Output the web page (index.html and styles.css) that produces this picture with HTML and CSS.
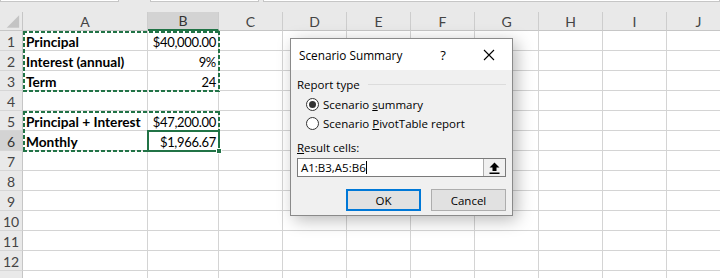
FILE: index.html
```html
<!DOCTYPE html>
<html>
<head lang="en">
    <meta charset="UTF-8">
    <title>Scenario Summary</title>
    <link rel="stylesheet" href="styles.css">
</head>
<body>
<div class="topbar">
    <div class="namebox"></div>
    <div class="fxbox"></div>
    <div class="formula"></div>
</div>
<div class="stack">
    <div class="sheet" id="sheet"></div>
    <div class="marks">
        <div class="ants ants1"></div>
        <div class="ants ants2"></div>
        <div class="active"><span class="handle"></span></div>
    </div>
</div>

<div class="dialog">
    <div class="title">
        <span class="title-text">Scenario Summary</span>
        <span class="tbtn help">?</span>
        <span class="tbtn close">
            <svg width="12" height="12" viewBox="0 0 12 12"><path d="M1 1L11 11M11 1L1 11" stroke="#000" stroke-width="1.1" fill="none"/></svg>
        </span>
    </div>
    <div class="body">
        <div class="group">
            <span>Report type</span>
            <span class="rule"></span>
        </div>
        <label class="radio first"><span class="dot checked"></span><span>Scenario <u>s</u>ummary</span></label>
        <label class="radio"><span class="dot"></span><span>Scenario <u>P</u>ivotTable report</span></label>
        <div class="field-label"><u>R</u>esult cells:</div>
        <div class="field">
            <div class="field-text">A1:B3,A5:B6<span class="caret"></span></div>
            <div class="field-btn">
                <svg width="11" height="12" viewBox="0 0 11 12"><path d="M5.5 0.5L10.5 5.5H7.5V9H3.5V5.5H0.5Z" fill="#000"/><rect x="0.5" y="10.5" width="10" height="1.5" fill="#000"/></svg>
            </div>
        </div>
        <div class="buttons">
            <span class="btn default">OK</span>
            <span class="btn">Cancel</span>
        </div>
    </div>
</div>

<script>
    var cols = "ABCDEFGHIJ".split("");
    var data = {
        1: ["Principal", "$40,000.00"],
        2: ["Interest (annual)", "9%"],
        3: ["Term", "24"],
        5: ["Principal + Interest", "$47,200.00"],
        6: ["Monthly", "$1,966.67"]
    };
    var html = '<div class="hd corner"><svg width="23" height="19" viewBox="0 0 23 19"><path d="M7 16H20V3Z" fill="#c4c4c4"/></svg></div>';
    for (var c = 0; c < cols.length; c++) {
        html += '<div class="hd col' + (cols[c] == "B" ? ' on' : '') + '">' + cols[c] + '</div>';
    }
    for (var r = 1; r <= 13; r++) {
        // row 13 is cut by the window edge, its number doesn't show
        html += '<div class="hd row' + (r == 6 ? ' on' : '') + '">' + (r < 13 ? r : '') + '</div>';
        for (var c = 0; c < cols.length; c++) {
            var txt = "";
            var cls = "cell";
            if (data[r] && c == 0) { txt = data[r][0]; cls += " lbl"; }
            if (data[r] && c == 1) { txt = data[r][1]; cls += " num"; }
            html += '<div class="' + cls + '">' + txt + '</div>';
        }
    }
    document.getElementById("sheet").innerHTML = html;
</script>
</body>
</html>
```

FILE: styles.css
```css
*{
    margin: 0;
    padding: 0;
    box-sizing: border-box;
}
body{
    width: 720px;
    height: 278px;
    overflow: hidden;
    background: #fff;
    position: relative;
    font-family: "Lato", "Liberation Sans", sans-serif;
}

/* formula bar remains */
.topbar{
    display: flex;
    height: 12px;
    background: #e9e9e9;
}
.topbar div{
    height: 2px;
    background: #fff;
    border: 1px solid #c6c6c6;
    border-top: none;
}
.namebox{ width: 119px; }
.fxbox{ width: 109px; margin-left: 31px; }
.formula{ flex: 1; margin-left: 4px; }

/* sheet */
.stack{
    display: grid;
}
.sheet, .marks{
    grid-area: 1 / 1;
    display: grid;
    grid-template-columns: 23px 125px 71px repeat(8, 64px);
    grid-template-rows: 19px repeat(13, 20px);
}
.hd{
    background: #e9e9e9;
    color: #444;
    font-size: 14px;
    display: flex;
    align-items: center;
    justify-content: center;
}
.hd.col{
    border-right: 1px solid #cdcdcd;
    border-bottom: 1px solid #c6c6c6;
}
.hd.row{
    border-right: 1px solid #c6c6c6;
    border-bottom: 1px solid #d6d6d6;
    padding-top: 2px;
}
.hd.on{
    background: #d3d3d3;
    color: #333;
}
.hd.col.on{
    border-bottom: 2px solid #217346;
}
.corner{
    border-right: 1px solid #c6c6c6;
    border-bottom: 1px solid #c6c6c6;
    align-items: stretch;
    justify-content: stretch;
}
.cell{
    border-right: 1px solid #d4d4d4;
    border-bottom: 1px solid #d4d4d4;
    font-size: 13.7px;
    line-height: 20px;
    padding: 1px 2px 0 3px;
    white-space: nowrap;
    color: #000;
}
.cell.lbl{
    font-weight: bold;
}
.cell.num{
    text-align: right;
    font-size: 13px;
    letter-spacing: -0.3px;
}

/* selection marks */
.marks{
    pointer-events: none;
}
.ants{
    margin: 0 -1px -1px 0;
    background:
        repeating-linear-gradient(90deg, #217346 0 4px, transparent 4px 6px) top left / 100% 2px no-repeat,
        repeating-linear-gradient(90deg, #217346 0 4px, transparent 4px 6px) bottom left / 100% 2px no-repeat,
        repeating-linear-gradient(180deg, #217346 0 4px, transparent 4px 6px) top left / 2px 100% no-repeat,
        repeating-linear-gradient(180deg, #217346 0 4px, transparent 4px 6px) top right / 2px 100% no-repeat;
}
.ants1{
    grid-row: 2 / 5;
    grid-column: 2 / 4;
}
.ants2{
    grid-row: 6 / 8;
    grid-column: 2 / 4;
}
.active{
    grid-row: 7;
    grid-column: 3;
    margin: -1px -1px -1px -1px;
    border: 2px solid #217346;
    position: relative;
}
.handle{
    position: absolute;
    right: -4px;
    bottom: -4px;
    width: 6px;
    height: 6px;
    background: #217346;
    border: 1px solid #fff;
}

/* dialog */
.dialog{
    position: absolute;
    left: 290px;
    top: 38px;
    width: 223px;
    height: 178px;
    background: #f0f0f0;
    border: 1px solid #8a8a8a;
    box-shadow: 4px 4px 16px rgba(0, 0, 0, 0.28);
    font-family: "Open Sans", "Noto Sans", sans-serif;
    font-size: 11.5px;
    color: #000;
}
.title{
    height: 31px;
    background: #fff;
    display: flex;
    align-items: center;
    padding-left: 8px;
}
.title-text{
    flex: 1;
    font-size: 11.8px;
}
.tbtn{
    width: 46px;
    height: 31px;
    display: flex;
    align-items: center;
    justify-content: center;
}
.help{
    font-size: 13px;
}
.body{
    padding: 6px 6px 0 6px;
}
.group{
    display: flex;
    align-items: center;
    height: 16px;
}
.rule{
    flex: 1;
    border-top: 1px solid #dcdcdc;
    margin-left: 8px;
}
.radio{
    display: flex;
    align-items: center;
    height: 19px;
    padding-left: 9px;
}
.radio.first{
    margin-top: 3px;
}
.dot{
    width: 13px;
    height: 13px;
    border: 1px solid #333;
    border-radius: 50%;
    background: #fff;
    margin-right: 4px;
    display: flex;
    align-items: center;
    justify-content: center;
}
.dot.checked::after{
    content: "";
    width: 7px;
    height: 7px;
    border-radius: 50%;
    background: #333;
}
.field-label{
    margin-top: 7px;
    height: 16px;
    line-height: 16px;
}
.field{
    margin-top: 2px;
    display: flex;
    height: 19px;
    border: 1px solid #7a7a7a;
    background: #fff;
}
.field-text{
    flex: 1;
    padding-left: 3px;
    line-height: 17px;
    display: flex;
    align-items: center;
}
.caret{
    display: inline-block;
    width: 1px;
    height: 13px;
    background: #000;
}
.field-btn{
    width: 22px;
    border-left: 1px solid #adadad;
    background: #f0f0f0;
    display: flex;
    align-items: center;
    justify-content: center;
}
.buttons{
    display: flex;
    justify-content: flex-end;
    gap: 10px;
    margin-top: 12px;
}
.btn{
    width: 75px;
    height: 22px;
    background: #e1e1e1;
    border: 1px solid #adadad;
    display: flex;
    align-items: center;
    justify-content: center;
}
.btn.default{
    border: 2px solid #0078d7;
}
```
